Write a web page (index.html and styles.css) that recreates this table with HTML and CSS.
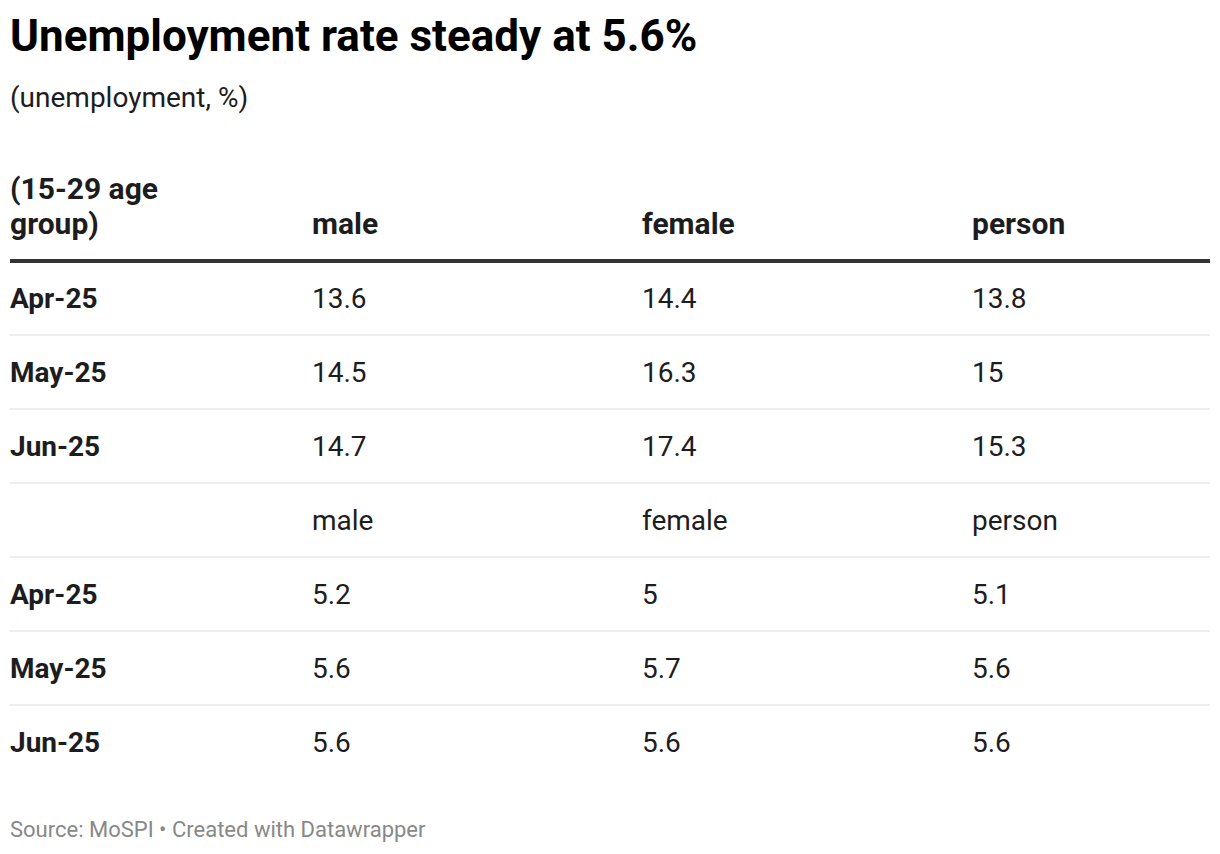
FILE: index.html
```html
<!DOCTYPE html>
<html>
<head>
<meta charset="utf-8">
<link rel="stylesheet" href="styles.css">
</head>
<body>
<div class="chart">
  <h1 class="title">Unemployment rate steady at 5.6%</h1>
  <p class="subtitle">(unemployment, %)</p>
  <table class="data">
    <colgroup>
      <col class="col-label">
      <col class="col-val">
      <col class="col-val">
      <col class="col-last">
    </colgroup>
    <thead>
      <tr>
        <th class="c0"><span class="wrap">(15-29 age group)</span></th>
        <th>male</th>
        <th>female</th>
        <th>person</th>
      </tr>
    </thead>
    <tbody>
      <tr><th class="c0">Apr-25</th><td>13.6</td><td>14.4</td><td>13.8</td></tr>
      <tr><th class="c0">May-25</th><td>14.5</td><td>16.3</td><td>15</td></tr>
      <tr><th class="c0">Jun-25</th><td>14.7</td><td>17.4</td><td>15.3</td></tr>
      <tr><th class="c0"></th><td>male</td><td>female</td><td>person</td></tr>
      <tr><th class="c0">Apr-25</th><td>5.2</td><td>5</td><td>5.1</td></tr>
      <tr><th class="c0">May-25</th><td>5.6</td><td>5.7</td><td>5.6</td></tr>
      <tr><th class="c0">Jun-25</th><td>5.6</td><td>5.6</td><td>5.6</td></tr>
    </tbody>
  </table>
  <p class="footer">Source: MoSPI • Created with Datawrapper</p>
</div>
</body>
</html>
```
FILE: styles.css
```css
html, body {
  margin: 0;
  padding: 0;
  background: #fff;
}
body {
  font-family: Roboto, "Liberation Sans", Arial, sans-serif;
  color: #1d1d1d;
}
.chart {
  padding: 10px 10px 0 10px;
}
.title {
  margin: 0;
  font-size: 44px;
  font-weight: 700;
  line-height: 52px;
  color: #000;
}
.subtitle {
  margin: 19px 0 0 0;
  font-size: 28px;
  line-height: 34px;
  color: #1d1d1d;
}
.data {
  margin-top: 56px;
  width: 1200px;
  border-collapse: collapse;
  table-layout: fixed;
  font-size: 28px;
}
.col-label { width: 302px; }
.col-val { width: 330px; }
.col-last { width: 238px; }
.data th, .data td {
  text-align: left;
  padding: 0;
}
.data thead th {
  font-size: 30px;
  font-weight: 700;
  vertical-align: bottom;
  line-height: 35px;
  padding-bottom: 18px;
  border-bottom: 4px solid #333;
  color: #1d1d1d;
}
.wrap {
  display: block;
  width: 200px;
}
.data tbody tr {
  height: 74px;
  border-bottom: 2px solid #eeeeee;
}
.data tbody tr:last-child {
  border-bottom: none;
}
.data tbody th {
  font-weight: 700;
}
.data tbody td {
  font-weight: 400;
}
.footer {
  margin: 38px 0 0 0;
  font-size: 22px;
  line-height: 26px;
  color: #888;
}
```
